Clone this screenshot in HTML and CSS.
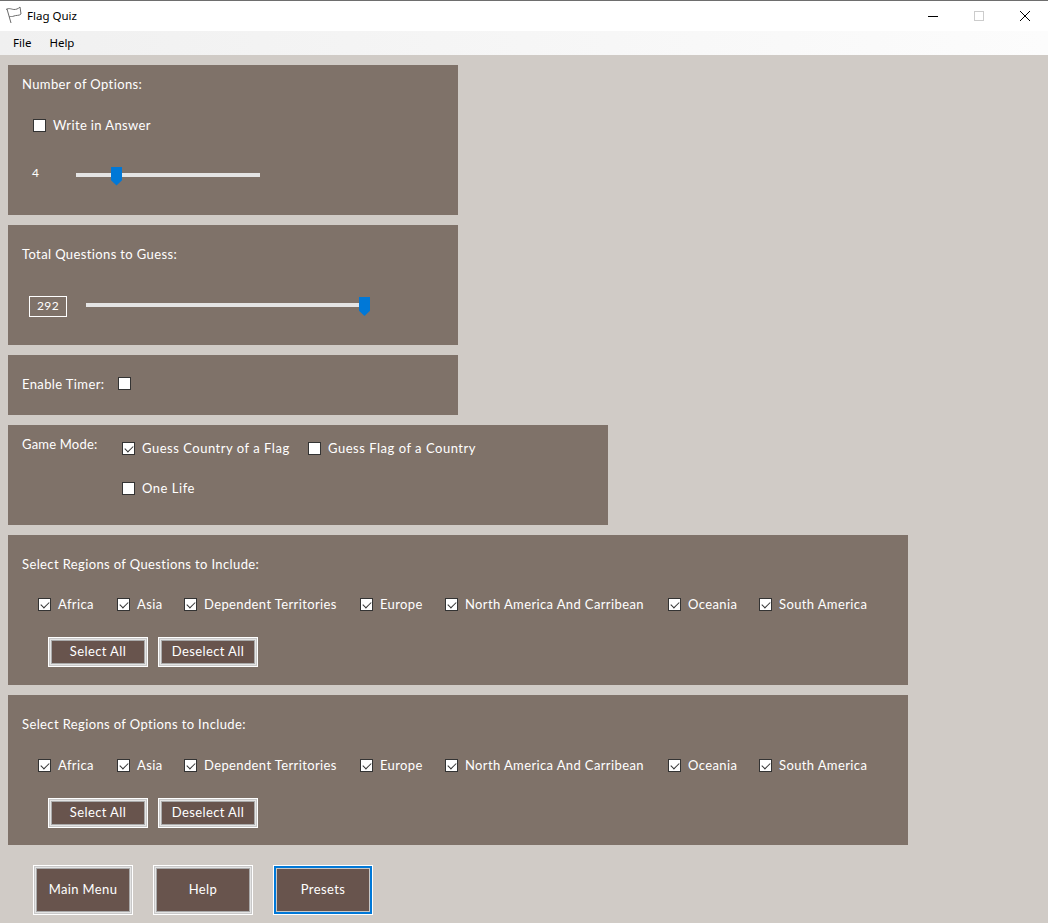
FILE: index.html
```html
<!DOCTYPE html>
<html lang="en">
<head>
<meta charset="utf-8">
<title>Flag Quiz</title>
<link rel="stylesheet" href="styles.css">
</head>
<body>
<header class="titlebar">
  <svg class="app-icon" width="18" height="18" viewBox="0 0 18 18" fill="none" stroke="#6b6b6b" stroke-width="1">
    <path d="M2 3L6 17"/>
    <path d="M1 3.500C4 1.500 7 3.500 9 3.500C11 3.500 13 3 15 1L16 8C14 10 11 9 9 10C7 11 6 10 4 11"/>
  </svg>
  <span class="app-title">Flag Quiz</span>
  <div class="win-controls">
    <span class="win-btn"><svg width="12" height="12" viewBox="0 0 12 12"><path d="M1 6.500H11" stroke="#000"/></svg></span>
    <span class="win-btn"><svg width="12" height="12" viewBox="0 0 12 12"><rect x="1.500" y="1.500" width="9" height="9" fill="none" stroke="#ccc"/></svg></span>
    <span class="win-btn"><svg width="12" height="12" viewBox="0 0 12 12"><path d="M1 1L11 11M11 1L1 11" stroke="#000"/></svg></span>
  </div>
</header>
<nav class="menubar"><span>File</span><span>Help</span></nav>
<main class="content">
  <section class="panel panel-options">
    <div class="heading">Number of Options:</div>
    <label class="check write-in"><span class="box"></span><span>Write in Answer</span></label>
    <div class="slider-row row-options">
      <span class="plain-value">4</span>
      <div class="slider slider-options"><span class="thumb thumb-options"></span></div>
    </div>
  </section>
  <section class="panel panel-total">
    <div class="heading">Total Questions to Guess:</div>
    <div class="slider-row row-total">
      <span class="value-box">292</span>
      <div class="slider slider-total"><span class="thumb thumb-total"></span></div>
    </div>
  </section>
  <section class="panel panel-timer">
    <span class="timer-label">Enable Timer:</span>
    <span class="box"></span>
  </section>
  <section class="panel panel-mode">
    <div class="mode-label">Game Mode:</div>
    <div class="mode-grid">
      <label class="check"><span class="box on"></span><span>Guess Country of a Flag</span></label>
      <label class="check"><span class="box"></span><span>Guess Flag of a Country</span></label>
      <label class="check"><span class="box"></span><span>One Life</span></label>
    </div>
  </section>
  <section class="panel panel-region">
    <div class="heading">Select Regions of Questions to Include:</div>
    <div class="region-row">
      <label class="check"><span class="box on"></span><span>Africa</span></label>
      <label class="check"><span class="box on"></span><span>Asia</span></label>
      <label class="check"><span class="box on"></span><span>Dependent Territories</span></label>
      <label class="check"><span class="box on"></span><span>Europe</span></label>
      <label class="check"><span class="box on"></span><span>North America And Carribean</span></label>
      <label class="check"><span class="box on"></span><span>Oceania</span></label>
      <label class="check"><span class="box on"></span><span>South America</span></label>
    </div>
    <div class="small-btns"><button class="btn small">Select All</button><button class="btn small">Deselect All</button></div>
  </section>
  <section class="panel panel-region second">
    <div class="heading">Select Regions of Options to Include:</div>
    <div class="region-row">
      <label class="check"><span class="box on"></span><span>Africa</span></label>
      <label class="check"><span class="box on"></span><span>Asia</span></label>
      <label class="check"><span class="box on"></span><span>Dependent Territories</span></label>
      <label class="check"><span class="box on"></span><span>Europe</span></label>
      <label class="check"><span class="box on"></span><span>North America And Carribean</span></label>
      <label class="check"><span class="box on"></span><span>Oceania</span></label>
      <label class="check"><span class="box on"></span><span>South America</span></label>
    </div>
    <div class="small-btns"><button class="btn small">Select All</button><button class="btn small">Deselect All</button></div>
  </section>
  <div class="bottom-btns">
    <button class="btn large">Main Menu</button>
    <button class="btn large">Help</button>
    <button class="btn large focus">Presets</button>
  </div>
</main>
</body>
</html>
```
FILE: styles.css
```css
* { box-sizing: border-box; }
html, body { margin: 0; padding: 0; height: 923px; overflow: hidden; }
body { background: #d0cbc6; font-family: "Lato", "Liberation Sans", sans-serif; font-size: 13px; color: #fff; }
.titlebar { height: 31px; background: #fff; border-top: 1px solid #6e6e6e; display: flex; align-items: center; color: #000; font-family: "Noto Sans", sans-serif; font-size: 11.5px; }
.app-icon { margin-left: 5px; margin-top: -2px; }
.app-title { margin-left: 4px; margin-bottom: 1px; }
.win-controls { margin-left: auto; display: flex; }
.win-btn { width: 46px; height: 30px; display: flex; align-items: center; justify-content: center; }
.menubar { height: 24px; background: linear-gradient(90deg, #f0f0f0, #fcfcfc); display: flex; align-items: center; gap: 18px; padding: 0 0 2px 13px; color: #000; font-family: "Noto Sans", sans-serif; font-size: 11.5px; }
.content { padding: 10px 8px 0; display: flex; flex-direction: column; gap: 10px; align-items: flex-start; }
.panel { background: #7f7269; padding-left: 14px; letter-spacing: 0.38px; }
.panel-options { width: 450px; height: 150px; padding-top: 11px; }
.panel-total { width: 450px; height: 120px; padding-top: 21px; }
.panel-timer { width: 450px; height: 60px; display: flex; align-items: center; gap: 14px; padding-bottom: 3px; }
.panel-mode { width: 600px; height: 100px; display: flex; padding-top: 11px; letter-spacing: 0.52px; }
.panel-region { width: 900px; height: 150px; padding-top: 21px; }
.heading { line-height: 16px; }
.check { display: flex; align-items: center; gap: 7px; line-height: 16px; white-space: nowrap; }
.box { width: 13px; height: 13px; flex: none; background: #fff; border: 1px solid #333; position: relative; }
.box.on::after { content: ""; position: absolute; left: 2px; top: 1px; width: 7px; height: 4px; border-left: 1px solid #333; border-bottom: 1px solid #333; transform: rotate(-45deg) translate(-1px, 1px); }
.write-in { margin: 25px 0 0 11px; }
.slider-row { display: flex; align-items: center; }
.row-options { margin-top: 32px; margin-left: 10px; font-size: 12px; }
.plain-value { width: 44px; padding-bottom: 4px; }
.row-total { margin-top: 34px; margin-left: 7px; font-size: 12px; }
.value-box { width: 38px; height: 21px; border: 1px solid #fff; display: flex; align-items: center; justify-content: center; margin-right: 19px; padding-bottom: 2px; }
.slider { height: 4px; background: #e4e4e4; position: relative; }
.slider-options { width: 184px; }
.slider-total { width: 284px; margin-bottom: 3px; }
.thumb { position: absolute; top: -6px; width: 11px; height: 19px; background: #0078d7; clip-path: polygon(0 0, 100% 0, 100% 72%, 50% 100%, 0 72%); }
.thumb-options { left: 35px; }
.thumb-total { right: 0; }
.mode-label { width: 100px; line-height: 16px; letter-spacing: 0.2px; }
.mode-grid { display: grid; grid-template-columns: 186px auto; grid-template-rows: 16px 16px; row-gap: 24px; justify-content: start; margin-top: 4px; }
.region-row { display: grid; grid-template-columns: 79px 67px 176px 85px 223px 91px auto; margin: 24px 0 0 16px; }
.second .region-row { margin-top: 25px; }
.small-btns { display: flex; gap: 12px; margin: 26px 0 0 27px; }
.second .small-btns { margin-top: 26px; }
.btn { background: #68544d; color: #fff; font-family: inherit; font-size: 13px; letter-spacing: 0.38px; padding: 0 0 2px; border: 1px solid #c8c8c8; outline: 1px solid #fff; outline-offset: 0; box-shadow: inset 0 0 0 1px #e4e4e4, inset 0 0 0 2px #aaa; }
.btn.small { width: 98px; height: 28px; }
.btn.large { width: 98px; height: 48px; }
.btn.focus { border: 2px solid #0078d7; box-shadow: inset 0 0 0 1px #c8c8c8; }
.bottom-btns { display: flex; gap: 22px; margin: 11px 0 0 26px; }
```
